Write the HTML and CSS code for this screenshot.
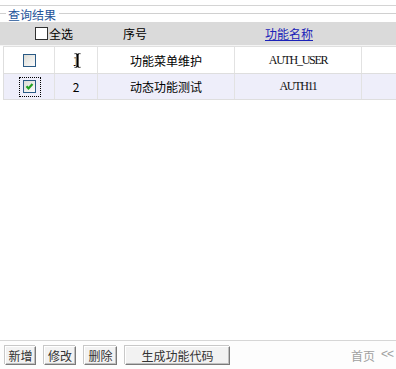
FILE: index.html
```html
<!DOCTYPE html>
<html>
<head>
<meta charset="utf-8">
<link rel="stylesheet" href="styles.css">
</head>
<body>
<div class="page">
  <div class="topline"></div>
  <div class="legend">
    <span class="lg-left"></span>
    <span class="lg-text">查询结果</span>
    <span class="lg-right"></span>
  </div>
  <div class="head">
    <div class="hc h1"><span class="cb cb-head"></span><span>全选</span></div>
    <div class="hc h2">序号</div>
    <div class="hc h3"><a class="link">功能名称</a></div>
  </div>
  <div class="rows">
    <div class="row">
      <div class="c c1"><span class="cb"></span></div>
      <div class="c c2 numcell">
        <span class="num">1</span>
        <svg class="ibeam" width="9" height="17" viewBox="0 0 9 17">
          <path d="M1 1h3l0.5 0.5 0.5-0.5h3v1.5H6v12h2v1.5H5l-0.5-0.5-0.5 0.5H1v-1.5h2V2.5H1z" fill="#000" stroke="#fff" stroke-width="0.8"/>
        </svg>
      </div>
      <div class="c c3">功能菜单维护</div>
      <div class="c c4 mono">AUTH_USER</div>
      <div class="c c5"></div>
    </div>
    <div class="row alt">
      <div class="c c1"><span class="focus"><span class="cb checked"><svg width="11" height="11" viewBox="0 0 11 11"><path d="M2.5 5.2l2 2.2 4-4.4" fill="none" stroke="#21a121" stroke-width="2.2"/></svg></span></span></div>
      <div class="c c2">2</div>
      <div class="c c3">动态功能测试</div>
      <div class="c c4 mono">AUTH11</div>
      <div class="c c5"></div>
    </div>
  </div>
  <div class="spacer"></div>
  <div class="bottom">
    <div class="btns">
      <button class="btn b-new">新增</button>
      <button class="btn b-edit">修改</button>
      <button class="btn b-del">删除</button>
      <button class="btn b-gen">生成功能代码</button>
    </div>
    <div class="pager"><span>首页</span><span class="prev">&lt;&lt;</span></div>
  </div>
</div>
</body>
</html>
```

FILE: styles.css
```css
html, body {
  margin: 0;
  padding: 0;
  background: #fff;
  overflow: hidden;
}
.page {
  width: 396px;
  height: 369px;
  display: flex;
  flex-direction: column;
  font-family: "Noto Sans CJK SC", "Noto Sans", sans-serif;
  font-size: 12px;
  color: #000;
  overflow: hidden;
}
.topline {
  height: 5px;
  border-bottom: 1px solid #d4d4d4;
  flex: none;
}
.legend {
  height: 16px;
  display: flex;
  align-items: center;
  flex: none;
}
.lg-left {
  width: 6px;
  border-top: 1px solid #d0d0d0;
  margin-top: -1px;
}
.lg-text {
  color: #24549a;
  padding: 0 3px 0 2px;
  line-height: 14px;
  margin-top: 1px;
}
.lg-right {
  flex: 1;
  border-top: 1px solid #d0d0d0;
  margin-top: -1px;
}
.head {
  height: 23px;
  background: #dadada;
  display: flex;
  align-items: center;
  padding-left: 8px;
  flex: none;
  border-bottom: 1px solid #f4f4f4;
}
.hc {
  flex: none;
  display: flex;
  justify-content: center;
  align-items: center;
  height: 100%;
}
.h1 { width: 92px; }
.h2 { width: 70px; }
.h3 { width: 238px; }
.link {
  color: #1b22b8;
  text-decoration: underline;
}
.cb {
  display: inline-flex;
  align-items: center;
  justify-content: center;
  width: 11px;
  height: 11px;
  border: 1px solid #2a5a85;
  background: linear-gradient(135deg, #dcdcd6, #fbfbfb);
  box-sizing: content-box;
}
.cb-head {
  border-color: #303030;
  background: #fff;
  margin-right: 1px;
}
.rows {
  margin-left: 3px;
  flex: none;
  border-top: 1px solid #e0e0e0;
}
.row {
  display: flex;
  height: 26px;
  border-bottom: 1px solid #dedede;
  border-left: 1px solid #dedede;
}
.row.alt {
  background: #eeeefa;
  height: 25px;
}
.c {
  flex: none;
  display: flex;
  align-items: center;
  justify-content: center;
  border-right: 1px solid #e2e2e2;
  box-sizing: border-box;
  height: 100%;
}
.c1 { width: 51px; }
.c2 { width: 43px; }
.c3 { width: 137px; }
.c4 { width: 127px; }
.c5 { width: 60px; }
.numcell { position: relative; }
.ibeam {
  position: absolute;
  left: 18px;
  top: 5px;
}
.mono {
  font-family: "Liberation Serif", "Times New Roman", serif;
  font-size: 12px;
  letter-spacing: -1.3px;
  color: #111;
}
.focus {
  display: inline-flex;
  align-items: center;
  justify-content: center;
  width: 20px;
  height: 18px;
  border: 1px dotted #000;
  margin-left: 1px;
}
.spacer { flex: 1; }
.bottom {
  height: 28px;
  flex: none;
  border-top: 1px solid #d6d6d6;
  display: flex;
  align-items: center;
  justify-content: space-between;
  background: #fdfdfd;
}
.btns {
  display: flex;
  gap: 8px;
  padding-left: 5px;
}
.btn {
  font-family: "Noto Sans CJK SC", sans-serif;
  font-size: 12px;
  color: #333;
  height: 19px;
  padding: 0;
  line-height: 15px;
  background: #f2f2f2;
  border: 1px solid;
  border-color: #fff #7a7a7a #7a7a7a #fff;
  box-shadow: inset -1px -1px 0 #c0c0c0, -1px -1px 0 #c8c8c8;
  cursor: default;
}
.b-new { width: 31px; }
.b-edit { width: 32px; }
.b-del { width: 33px; }
.b-gen { width: 105px; }
.pager {
  color: #a0a0a0;
  display: flex;
  gap: 6px;
  padding-right: 3px;
}
.prev { font-family: "Liberation Sans", sans-serif; letter-spacing: -1px; }
```
